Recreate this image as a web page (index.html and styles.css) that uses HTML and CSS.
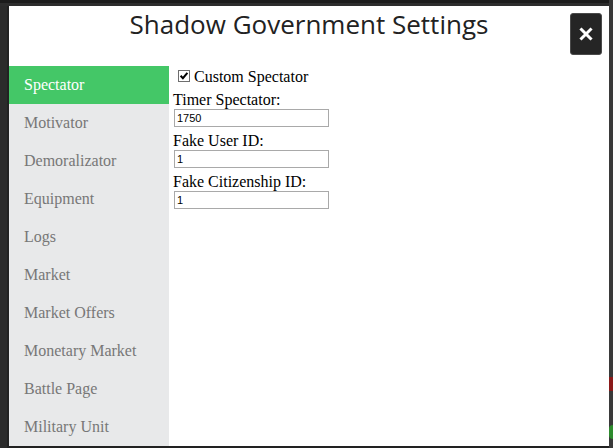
FILE: index.html
```html
<!DOCTYPE html>
<html>
<head>
<meta charset="utf-8">
<link rel="stylesheet" href="styles.css">
</head>
<body>
<div class="backdrop">
  <div class="edge-right">
    <span class="mark mark-red"></span>
    <span class="mark mark-green"></span>
  </div>
  <div class="modal">
    <div class="modal-header">
      <h1 class="modal-title">Shadow Government Settings</h1>
      <button class="close-btn" aria-label="Close">
        <svg width="14" height="14" viewBox="0 0 14 14"><path d="M2.5 2.5 L11.5 11.5 M11.5 2.5 L2.5 11.5" stroke="#fff" stroke-width="3" stroke-linecap="square"/></svg>
      </button>
    </div>
    <div class="modal-body">
      <ul class="side-nav">
        <li class="nav-item active">Spectator</li>
        <li class="nav-item">Motivator</li>
        <li class="nav-item">Demoralizator</li>
        <li class="nav-item">Equipment</li>
        <li class="nav-item">Logs</li>
        <li class="nav-item">Market</li>
        <li class="nav-item">Market Offers</li>
        <li class="nav-item">Monetary Market</li>
        <li class="nav-item">Battle Page</li>
        <li class="nav-item">Military Unit</li>
      </ul>
      <div class="pane">
        <label class="check-row">
          <span class="checkbox"><svg width="12" height="12" viewBox="0 0 12 12"><rect x="0.5" y="0.5" width="11" height="11" fill="#fff" stroke="#6e6e6e"/><path d="M2.6 5.8 L4.9 8.2 L9.4 2.9" fill="none" stroke="#000" stroke-width="2"/></svg></span>
          Custom Spectator
        </label>
        <div class="field">
          <div class="field-label">Timer Spectator:</div>
          <input class="field-input" type="text" value="1750">
        </div>
        <div class="field">
          <div class="field-label">Fake User ID:</div>
          <input class="field-input" type="text" value="1">
        </div>
        <div class="field">
          <div class="field-label">Fake Citizenship ID:</div>
          <input class="field-input" type="text" value="1">
        </div>
      </div>
    </div>
  </div>
</div>
</body>
</html>
```
FILE: styles.css
```css
html, body {
  margin: 0;
  padding: 0;
  background: #232323;
  width: 613px;
  height: 448px;
  overflow: hidden;
}

.backdrop {
  position: relative;
  width: 613px;
  height: 448px;
  background: linear-gradient(#1c1c1c 0, #1c1c1c 3px, #2d2d2d 3px, #2d2d2d 6px, #222 6px);
  padding-top: 6px;
  padding-left: 9px;
  box-sizing: border-box;
}

.backdrop::before {
  content: "";
  position: absolute;
  left: 0;
  top: 6px;
  width: 7px;
  height: 442px;
  background: #2b2b2b;
}

.edge-right {
  position: absolute;
  right: 0;
  top: 0;
  width: 4px;
  height: 448px;
  background: #3a3a3a;
}

.mark {
  position: absolute;
  left: 0;
  width: 4px;
}

.mark-red {
  top: 377px;
  height: 14px;
  background: #8a1a1a;
}

.mark-green {
  top: 425px;
  height: 14px;
  border-radius: 7px 0 0 7px;
  background: #2e8b2e;
}

.modal {
  position: relative;
  width: 600px;
  height: 440px;
  background: #fff;
  display: flex;
  flex-direction: column;
}

.modal-header {
  height: 60px;
  position: relative;
}

.modal-title {
  margin: 0;
  text-align: center;
  font-family: "Open Sans", sans-serif;
  font-weight: 400;
  font-size: 26px;
  line-height: 36px;
  color: #222;
}

.close-btn {
  position: absolute;
  top: 7px;
  left: 561px;
  width: 32px;
  height: 42px;
  padding: 0;
  background: #252525;
  border: 1px solid #4a4a4a;
  border-radius: 3px;
  display: flex;
  align-items: center;
  justify-content: center;
}

.modal-body {
  flex: 1;
  display: flex;
}

.side-nav {
  list-style: none;
  margin: 0;
  padding: 0;
  width: 160px;
  background: #e8e9ea;
}

.nav-item {
  height: 38px;
  line-height: 38px;
  padding-left: 15px;
  font-family: "Liberation Serif", "Times New Roman", serif;
  font-size: 16px;
  color: #777;
}

.nav-item.active {
  background: #44c767;
  color: #fff;
}

.pane {
  flex: 1;
  padding: 2px 0 0 4px;
  font-family: "Liberation Serif", "Times New Roman", serif;
  font-size: 16px;
  color: #000;
}

.check-row {
  display: block;
  height: 23px;
  line-height: 18px;
}

.checkbox {
  display: inline-block;
  width: 12px;
  height: 12px;
  margin: 0 0 0 5px;
  vertical-align: 0px;
}

.checkbox svg {
  display: block;
}

.field {
  margin-bottom: 5px;
}

.field-label {
  line-height: 18px;
  height: 18px;
}

.field-input {
  display: block;
  box-sizing: border-box;
  width: 155px;
  height: 18px;
  margin: 0 0 0 1px;
  padding: 0 2px;
  border: 1px solid #a9a9a9;
  font-family: "Liberation Sans", Arial, sans-serif;
  font-size: 11px;
  color: #000;
  background: #fff;
  outline: none;
}
```
